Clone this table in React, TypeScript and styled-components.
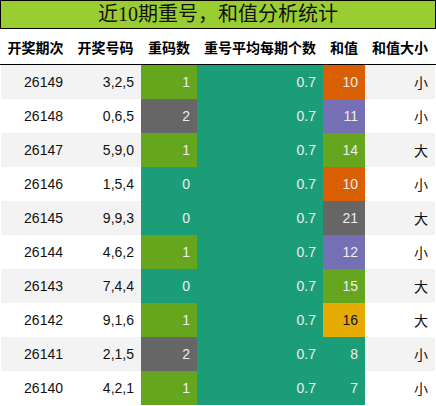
import React from "react";
import styled, { createGlobalStyle } from "styled-components";

const GlobalStyle = createGlobalStyle`
  html, body { margin: 0; padding: 0; background: #ffffff; }
  body { font-family: "Liberation Sans", "Noto Sans CJK SC", sans-serif; }
`;

const C = {
  green: "#66a61e",
  gray: "#666666",
  teal: "#1b9e77",
  orange: "#d95f02",
  purple: "#7570b3",
  yellow: "#e6ab02",
};

const Page = styled.div`
  width: 436px;
  display: flex;
  flex-direction: column;
`;

const Title = styled.div`
  height: 27px;
  border: 1px solid #000;
  background: #9acd32;
  display: flex;
  align-items: center;
  justify-content: center;
  font-family: "Liberation Serif", "Noto Sans CJK SC", serif;
  font-size: 20px;
  color: #111;
  line-height: 27px;
`;

const Cols = "69px 71px 56px 126px 42px 70px";

const HeaderRow = styled.div`
  display: grid;
  grid-template-columns: ${Cols};
  height: 35px;
  padding: 0 1px;
  border-bottom: 1px solid #000;
  background: #fff;
`;

const HeadCell = styled.div`
  display: flex;
  align-items: center;
  justify-content: center;
  font-family: "Liberation Sans", "Noto Sans CJK SC", sans-serif;
  font-weight: bold;
  font-size: 14px;
  color: #000;
  white-space: nowrap;
`;

const Body = styled.div`
  display: flex;
  flex-direction: column;
  padding: 0 1px;
`;

const Row = styled.div<{ $odd: boolean }>`
  display: grid;
  grid-template-columns: ${Cols};
  height: 34px;
  background: ${(p) => (p.$odd ? "#f3f3f3" : "#ffffff")};
`;

const Cell = styled.div<{ $bg?: string; $fg?: string }>`
  display: flex;
  align-items: center;
  justify-content: flex-end;
  padding-right: 7px;
  font-size: 14px;
  color: ${(p) => p.$fg ?? "#111"};
  background: ${(p) => p.$bg ?? "transparent"};
`;

const countColor = (n: number) => (n === 1 ? C.green : n === 2 ? C.gray : C.teal);

type R = { issue: string; nums: string; rep: number; sum: number; sumBg: string; size: string };

const rows: R[] = [
  { issue: "26149", nums: "3,2,5", rep: 1, sum: 10, sumBg: C.orange, size: "小" },
  { issue: "26148", nums: "0,6,5", rep: 2, sum: 11, sumBg: C.purple, size: "小" },
  { issue: "26147", nums: "5,9,0", rep: 1, sum: 14, sumBg: C.green, size: "大" },
  { issue: "26146", nums: "1,5,4", rep: 0, sum: 10, sumBg: C.orange, size: "小" },
  { issue: "26145", nums: "9,9,3", rep: 0, sum: 21, sumBg: C.gray, size: "大" },
  { issue: "26144", nums: "4,6,2", rep: 1, sum: 12, sumBg: C.purple, size: "小" },
  { issue: "26143", nums: "7,4,4", rep: 0, sum: 15, sumBg: C.green, size: "大" },
  { issue: "26142", nums: "9,1,6", rep: 1, sum: 16, sumBg: C.yellow, size: "大" },
  { issue: "26141", nums: "2,1,5", rep: 2, sum: 8, sumBg: C.teal, size: "小" },
  { issue: "26140", nums: "4,2,1", rep: 1, sum: 7, sumBg: C.teal, size: "小" },
];

const headers = ["开奖期次", "开奖号码", "重码数", "重号平均每期个数", "和值", "和值大小"];

export default function App() {
  return (
    <>
      <GlobalStyle />
      <Page>
        <Title>近10期重号，和值分析统计</Title>
        <HeaderRow>
          {headers.map((h) => (
            <HeadCell key={h}>{h}</HeadCell>
          ))}
        </HeaderRow>
        <Body>
          {rows.map((r, i) => (
            <Row key={r.issue} $odd={i % 2 === 0}>
              <Cell>{r.issue}</Cell>
              <Cell>{r.nums}</Cell>
              <Cell $bg={countColor(r.rep)} $fg="#eeeeee">{r.rep}</Cell>
              <Cell $bg={C.teal} $fg="#eeeeee">0.7</Cell>
              <Cell $bg={r.sumBg} $fg={r.sumBg === C.yellow ? "#111" : "#eeeeee"}>{r.sum}</Cell>
              <Cell>{r.size}</Cell>
            </Row>
          ))}
        </Body>
      </Page>
    </>
  );
}
